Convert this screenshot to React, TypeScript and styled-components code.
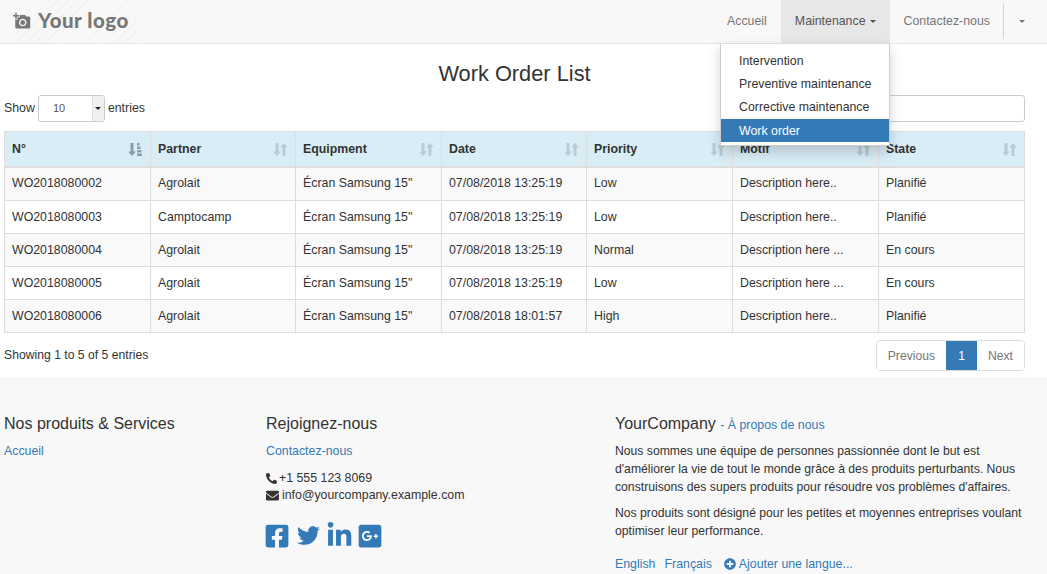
import React from "react";
import styled, { createGlobalStyle } from "styled-components";
import { FaPhoneAlt, FaEnvelope, FaFacebookSquare, FaTwitter, FaLinkedinIn, FaGooglePlusSquare, FaPlusCircle } from "react-icons/fa";
import { MdAddAPhoto } from "react-icons/md";

const Global = createGlobalStyle`
  html, body { margin: 0; padding: 0; background: #fff; overflow: hidden; }
  body { font-family: "Liberation Sans", Arial, sans-serif; font-size: 12.35px; line-height: 1.42857; color: #333; }
  * { box-sizing: border-box; }
`;

const Page = styled.div`width: 1047px; height: 574px; overflow: hidden; display: flex; flex-direction: column;`;

const Navbar = styled.nav`
  height: 44px; flex: none; background: #f8f8f8; border-bottom: 1px solid #e7e7e7;
  display: flex; justify-content: space-between; padding-right: 8px;
`;
const Brand = styled.div`
  width: 138px; height: 43px; display: flex; align-items: center; gap: 7px; padding: 0 0 2px 13px;
  color: #777; font-family: Lato, sans-serif; font-weight: 900; font-size: 20.5px; letter-spacing: .5px;
  background: repeating-linear-gradient(135deg, #f8f8f8 0 6px, #f2f2f2 6px 7px);
`;
const NavList = styled.div`display: flex; height: 43px; align-items: stretch; position: relative;`;
const NavItem = styled.div<{ $open?: boolean }>`
  padding: 0 14px; display: flex; align-items: center; gap: 4px; line-height: 41px;
  color: ${p => p.$open ? "#555" : "#777"}; background: ${p => p.$open ? "#e7e7e7" : "transparent"};
`;
const Caret = styled.span<{ $color?: string }>`
  display: inline-block; width: 0; height: 0; border-left: 3.5px solid transparent; border-right: 3.5px solid transparent;
  border-top: 3.5px solid ${p => p.$color || "#555"};
`;
const Divider = styled.div`width: 1px; height: 36px; margin: 3px 1px 0 0; margin-left: -1px; background: #d5d5d5;`;
const Menu = styled.div`
  position: absolute; top: 43px; left: 7px; width: 170px; height: 103px; background: #fff; padding: 6px 0 4px;
  border: 1px solid #ccc; border-top-color: #ddd; box-shadow: 0 6px 12px rgba(0,0,0,.175); z-index: 5;
`;
const MenuItem = styled.div<{ $active?: boolean }>`
  height: 23px; line-height: ${p => p.$active ? "25px" : "23px"}; padding-left: 18px;
  background: ${p => p.$active ? "#337ab7" : "transparent"}; color: ${p => p.$active ? "#fff" : "#333"};
`;

const Main = styled.main`flex: none; height: 333px; padding: 0 22px 0 4px; display: flex; flex-direction: column;`;
const Title = styled.h2`margin: 15px 0 0; height: 36px; text-align: center; font-weight: 400; font-size: 21.8px; line-height: 30px; color: #333;`;
const Controls = styled.div`display: flex; justify-content: space-between; align-items: center; height: 27px; margin-bottom: 9px;`;
const ShowBox = styled.div`display: flex; align-items: center; gap: 3px;`;
const SelectBox = styled.div`
  width: 67px; height: 27px; border: 1px solid #ccc; border-radius: 3px; background: #fff; display: flex; justify-content: space-between;
  font-size: 11px; line-height: 25px; padding-left: 14px; overflow: hidden; color: #555;
`;
const SelectArrow = styled.div`
  width: 12px; background: #f0f0f0; border-left: 1px solid #e0e0e0; display: flex; align-items: center; justify-content: center;
`;
const Search = styled.div`width: 200px; height: 27px; border: 1px solid #ccc; border-radius: 3px; background: #fff;`;

const Table = styled.table`width: 1020px; table-layout: fixed; border-collapse: collapse; border: 1px solid #ddd;`;
const Th = styled.th`
  background: #d9edf7; border: 1px solid #ddd; border-bottom-width: 2px; height: 35px; padding: 2px 8px 0 7px; text-align: left;
  font-weight: 700; color: #333; white-space: nowrap;
`;
const ThInner = styled.div`display: flex; justify-content: space-between; align-items: center;`;
const Tr = styled.tr<{ $odd?: boolean }>`background: ${p => p.$odd ? "#f9f9f9" : "#fff"};`;
const Td = styled.td<{ $h: number; $pt: number }>`
  border: 1px solid #ddd; height: ${p => p.$h}px; padding: ${p => p.$pt}px 7px 0; white-space: nowrap; overflow: hidden;
`;
const TableFoot = styled.div`display: flex; justify-content: space-between; align-items: center; margin-top: 7px; font-size: 12.2px;`;
const Pager = styled.div`display: flex; height: 31px; border: 1px solid #ddd; border-radius: 4px; overflow: hidden;`;
const Page_ = styled.div<{ $active?: boolean }>`
  line-height: 30px; padding: 0 ${p => p.$active ? "12px" : "11px"}; color: ${p => p.$active ? "#fff" : "#777"};
  background: ${p => p.$active ? "#337ab7" : "#fff"};
`;

const Footer = styled.footer`
  flex: 1; background: #f8f8f8; padding: 37px 22px 0 4px; display: grid; grid-template-columns: 262px 349px 1fr;
`;
const Col = styled.div`min-width: 0;`;
const H5 = styled.h5<{ $mb?: number }>`margin: 0 0 ${p => p.$mb ?? 9}px; font-size: 16px; font-weight: 400; line-height: 20px; color: #333;`;
const Small = styled.span`font-size: 12.35px; color: #337ab7;`;
const Link = styled.a<{ $ml?: number }>`
  color: #337ab7; text-decoration: none; display: inline-flex; align-items: center; gap: 3px; margin-left: ${p => p.$ml ?? 0}px;
  svg { margin-top: -2px; }
`;
const Contact = styled.div`margin-top: 9px; line-height: 17px; display: flex; flex-direction: column;`;
const ContactLine = styled.div<{ $gap: number }>`display: flex; align-items: center; gap: ${p => p.$gap}px;`;
const Social = styled.div`display: flex; align-items: center; margin: 19px 0 0 -2px; color: #337ab7; height: 26px;`;
const SocialSlot = styled.span<{ $ml: number }>`display: inline-flex; margin-left: ${p => p.$ml}px;`;
const P = styled.p`margin: 0 0 8px; line-height: 18px; font-size: 12.2px;`;
const Langs = styled.div`display: flex; gap: 9px; margin-top: 16px;`;

const SortIcon = ({ active }: { active?: boolean }) => (
  <svg width="13" height="13" viewBox="0 0 13 13" fill={active ? "#8c9ca6" : "#b9ccd6"}>
    <path d="M1.500 0h3v8.500H7L3 13-1 8.500h2.500z" />
    {active
      ? <path d="M8 0h2.500v2.500H8zM8 3.500h3.500v2.500H8zM8 7h4.500v2.500H8zM8 10.500h5V13H8z" />
      : <path d="M8.500 13V4.500H6L10 0l4 4.500h-2.500V13z" />}
  </svg>
);

const colWidths = [146, 145, 146, 145, 146, 146, 146];
const cols = ["N°", "Partner", "Equipment", "Date", "Priority", "Motif", "State"];
const rows: [string[], number, number][] = [
  [["WO2018080002", "Agrolait", "Écran Samsung 15\"", "07/08/2018 13:25:19", "Low", "Description here..", "Planifié"], 34, 0],
  [["WO2018080003", "Camptocamp", "Écran Samsung 15\"", "07/08/2018 13:25:19", "Low", "Description here..", "Planifié"], 33, 2],
  [["WO2018080004", "Agrolait", "Écran Samsung 15\"", "07/08/2018 13:25:19", "Normal", "Description here ...", "En cours"], 33, 2],
  [["WO2018080005", "Agrolait", "Écran Samsung 15\"", "07/08/2018 13:25:19", "Low", "Description here ...", "En cours"], 33, 2],
  [["WO2018080006", "Agrolait", "Écran Samsung 15\"", "07/08/2018 18:01:57", "High", "Description here..", "Planifié"], 33, 2],
];

export default function App() {
  return (
    <Page>
      <Global />
      <Navbar>
        <Brand><MdAddAPhoto size={18} />Your logo</Brand>
        <NavList>
          <NavItem>Accueil</NavItem>
          <NavItem $open>Maintenance <Caret /></NavItem>
          <NavItem>Contactez-nous</NavItem>
          <Divider />
          <NavItem><Caret $color="#777" /></NavItem>
          <Menu>
            <MenuItem>Intervention</MenuItem>
            <MenuItem>Preventive maintenance</MenuItem>
            <MenuItem>Corrective maintenance</MenuItem>
            <MenuItem $active>Work order</MenuItem>
          </Menu>
        </NavList>
      </Navbar>
      <Main>
        <Title>Work Order List</Title>
        <Controls>
          <ShowBox>
            Show
            <SelectBox>10<SelectArrow><Caret $color="#222" /></SelectArrow></SelectBox>
            entries
          </ShowBox>
          <Search />
        </Controls>
        <Table>
          <colgroup>{colWidths.map((w, i) => <col key={i} width={w} />)}</colgroup>
          <thead>
            <tr>
              {cols.map((c, i) => (
                <Th key={c}><ThInner>{c}<SortIcon active={i === 0} /></ThInner></Th>
              ))}
            </tr>
          </thead>
          <tbody>
            {rows.map(([cells, h, pt], i) => (
              <Tr key={cells[0]} $odd={i % 2 === 0}>
                {cells.map((t, j) => <Td key={j} $h={h} $pt={pt}>{t}</Td>)}
              </Tr>
            ))}
          </tbody>
        </Table>
        <TableFoot>
          <span>Showing 1 to 5 of 5 entries</span>
          <Pager>
            <Page_>Previous</Page_>
            <Page_ $active>1</Page_>
            <Page_>Next</Page_>
          </Pager>
        </TableFoot>
      </Main>
      <Footer>
        <Col>
          <H5>Nos produits &amp; Services</H5>
          <Link>Accueil</Link>
        </Col>
        <Col>
          <H5>Rejoignez-nous</H5>
          <Link>Contactez-nous</Link>
          <Contact>
            <ContactLine $gap={2}><FaPhoneAlt size={11} />+1 555 123 8069</ContactLine>
            <ContactLine $gap={3}><FaEnvelope size={13} />info@yourcompany.example.com</ContactLine>
          </Contact>
          <Social>
            <SocialSlot $ml={0}><FaFacebookSquare size={26} /></SocialSlot>
            <SocialSlot $ml={7}><FaTwitter size={23} /></SocialSlot>
            <SocialSlot $ml={6}><FaLinkedinIn size={27} /></SocialSlot>
            <SocialSlot $ml={4}><FaGooglePlusSquare size={26} /></SocialSlot>
          </Social>
        </Col>
        <Col>
          <H5 $mb={7}>YourCompany <Small>- À propos de nous</Small></H5>
          <P>Nous sommes une équipe de personnes passionnée dont le but est d'améliorer la vie de tout le monde grâce à des produits perturbants. Nous construisons des supers produits pour résoudre vos problèmes d'affaires.</P>
          <P>Nos produits sont désigné pour les petites et moyennes entreprises voulant optimiser leur performance.</P>
          <Langs>
            <Link>English</Link>
            <Link>Français</Link>
            <Link $ml={3}><FaPlusCircle size={12} /> Ajouter une langue...</Link>
          </Langs>
        </Col>
      </Footer>
    </Page>
  );
}
